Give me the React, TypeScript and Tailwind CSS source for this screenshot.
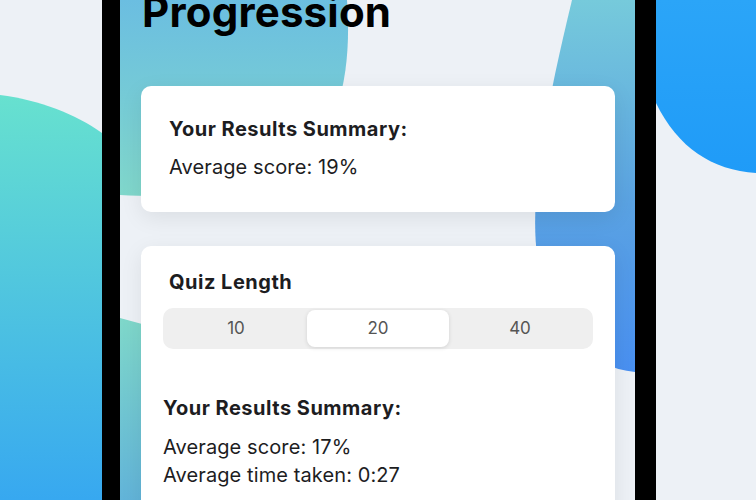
import React from "react";

function OuterBlobs() {
  return (
    <svg className="absolute inset-0" width="756" height="500" viewBox="0 0 756 500">
      <defs>
        <linearGradient id="ol" x1="0" y1="95" x2="0" y2="500" gradientUnits="userSpaceOnUse">
          <stop offset="0" stopColor="#67e1cf" />
          <stop offset="1" stopColor="#37a8f0" />
        </linearGradient>
        <linearGradient id="or" x1="0" y1="0" x2="0" y2="175" gradientUnits="userSpaceOnUse">
          <stop offset="0" stopColor="#2ba5f8" />
          <stop offset="1" stopColor="#1f9bf8" />
        </linearGradient>
      </defs>
      <path d="M0,95 C40,100 75,114 102,133 L102,500 L0,500 Z" fill="url(#ol)" />
      <path d="M656,0 L756,0 L756,173 C712,170 678,148 656,103 Z" fill="url(#or)" />
    </svg>
  );
}

function ScreenBlobs() {
  return (
    <svg className="absolute inset-0" width="515" height="500" viewBox="0 0 515 500">
      <defs>
        <linearGradient id="s1" x1="0" y1="0" x2="0" y2="195" gradientUnits="userSpaceOnUse">
          <stop offset="0" stopColor="#6bbee1" />
          <stop offset="1" stopColor="#80d7cb" />
        </linearGradient>
        <linearGradient id="s2" x1="0" y1="0" x2="0" y2="372" gradientUnits="userSpaceOnUse">
          <stop offset="0" stopColor="#76cadb" />
          <stop offset="0.55" stopColor="#5aa2e2" />
          <stop offset="1" stopColor="#4990f1" />
        </linearGradient>
        <linearGradient id="s3" x1="0" y1="318" x2="0" y2="500" gradientUnits="userSpaceOnUse">
          <stop offset="0" stopColor="#7fd8ca" />
          <stop offset="1" stopColor="#62b4d9" />
        </linearGradient>
      </defs>
      <path d="M0,0 L227,0 C232,70 220,130 180,165 C140,196 60,198 0,195 Z" fill="url(#s1)" />
      <path d="M452,0 L515,0 L515,372 C470,368 430,330 418,262 C410,212 418,140 452,0 Z" fill="url(#s2)" />
      <path d="M0,318 L140,356 L140,500 L0,500 Z" fill="url(#s3)" />
    </svg>
  );
}

export default function App() {
  const font = { fontFamily: "Inter, 'Noto Sans', sans-serif" };
  return (
    <div className="relative w-[756px] h-[500px] overflow-hidden bg-[#edf1f6]" style={font}>
      <OuterBlobs />
      <div className="relative flex h-full">
        <div className="w-[102px] shrink-0" />
        <div className="flex h-full w-[554px] shrink-0 bg-black pl-[18px] pr-[21px]">
          <div className="relative h-full w-[515px] overflow-hidden bg-[#edf1f6]">
            <ScreenBlobs />
            <div className="relative flex flex-col pl-[21px] pr-[20px]">
              <h1 className="-mt-[9px] pl-[1px] text-[42px] font-bold leading-[42px] tracking-[0.2px] text-black">
                Progression
              </h1>
              <div className="mt-[53px] flex h-[126px] flex-col rounded-[10px] bg-white px-[28px] pt-[31px] shadow-[0_6px_22px_rgba(0,0,0,0.08)]">
                <div className="text-[20px] font-bold leading-[24px] tracking-[0.5px] text-[#1d1d1f]">Your Results Summary:</div>
                <div className="mt-[14px] text-[20px] leading-[24px] tracking-[0.1px] text-[#1d1d1f]">Average score: 19%</div>
              </div>
              <div className="mt-[34px] flex h-[300px] flex-col rounded-[10px] bg-white px-[22px] pt-[24px] shadow-[0_6px_22px_rgba(0,0,0,0.08)]">
                <div className="pl-[6px] text-[20px] font-bold leading-[24px] tracking-[0.5px] text-[#1d1d1f]">Quiz Length</div>
                <div className="mt-[14px] flex h-[41px] items-stretch rounded-[10px] bg-[#efefef] p-[2px]">
                  <div className="flex flex-1 items-center justify-center text-[17px] text-[#555]">10</div>
                  <div className="flex flex-1 items-center justify-center rounded-[8px] bg-white text-[17px] text-[#555] shadow-[0_1px_4px_rgba(0,0,0,0.12)]">
                    20
                  </div>
                  <div className="flex flex-1 items-center justify-center text-[17px] text-[#555]">40</div>
                </div>
                <div className="mt-[47px] text-[20px] font-bold leading-[24px] tracking-[0.5px] text-[#1d1d1f]">Your Results Summary:</div>
                <div className="mt-[13px] text-[20px] leading-[28px] tracking-[0.1px] text-[#1d1d1f]">Average score: 17%</div>
                <div className="text-[20px] leading-[28px] tracking-[0.1px] text-[#1d1d1f]">Average time taken: 0:27</div>
              </div>
            </div>
          </div>
        </div>
      </div>
    </div>
  );
}
